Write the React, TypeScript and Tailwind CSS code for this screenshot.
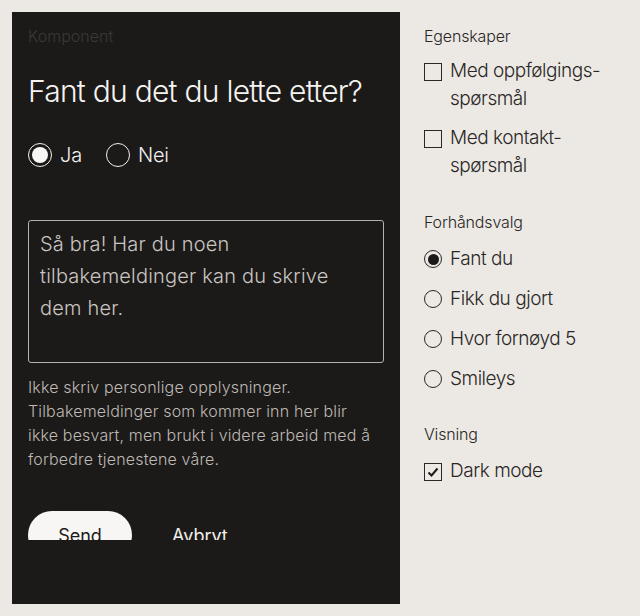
import React from "react";

const font = { fontFamily: "Inter, 'Noto Sans', sans-serif" };

function DarkRadio({ checked, label }: { checked?: boolean; label: string }) {
  return (
    <label className="flex items-center gap-2">
      <span className="w-6 h-6 rounded-full border-[1.5px] border-[#f3f1ee] flex items-center justify-center">
        {checked && <span className="w-4 h-4 rounded-full bg-[#f7f6f4]" />}
      </span>
      <span className="text-[20px] leading-7 text-[#f3f1ee] tracking-[-0.01em]">{label}</span>
    </label>
  );
}

function Checkbox({ checked, lines }: { checked?: boolean; lines: string[] }) {
  return (
    <div className="flex gap-2">
      <span className="mt-[6px] w-[18px] h-[18px] shrink-0 border-[1.5px] border-[#2a2725] flex items-center justify-center">
        {checked && (
          <svg width="12" height="12" viewBox="0 0 12 12" fill="none">
            <path d="M1.5 6.5 L4.5 9.5 L10.5 2.5" stroke="#1c1a19" strokeWidth="2" />
          </svg>
        )}
      </span>
      <span className="text-[19px] leading-7 text-[#2a2725] tracking-[-0.025em]">
        {lines.map((l, i) => (
          <span key={i} className="block">
            {l}
          </span>
        ))}
      </span>
    </div>
  );
}

function Radio({ checked, label }: { checked?: boolean; label: string }) {
  return (
    <div className="flex items-center gap-2">
      <span className="w-[18px] h-[18px] shrink-0 rounded-full border-[1.5px] border-[#2a2725] flex items-center justify-center">
        {checked && <span className="w-[11px] h-[11px] rounded-full bg-[#1c1a19]" />}
      </span>
      <span className="text-[19px] leading-7 text-[#2a2725] tracking-[-0.025em]">{label}</span>
    </div>
  );
}

export default function App() {
  return (
    <div className="min-h-[616px] w-[640px] bg-[#ece9e5] flex gap-6 p-3 font-light" style={font}>
      <div className="w-[388px] h-[592px] shrink-0 bg-[#1c1a19] px-4 pt-3">
        <div className="h-[516px] overflow-hidden">
          <div className="text-[16px] leading-6 text-[#3b3836]">Komponent</div>
          <h1 className="mt-[23px] text-[30px] leading-10 font-light tracking-[-0.025em] text-[#f5f3f0]">
            Fant du det du lette etter?
          </h1>
          <div className="mt-[30px] flex gap-6">
            <DarkRadio checked label="Ja" />
            <DarkRadio label="Nei" />
          </div>
          <div className="mt-[51px] h-[143px] border border-[#b5b1ad] rounded-[3px] pl-[11px] pr-3 pt-[7px] text-[20px] leading-8 text-[#c9c5c1] tracking-[0.01em]">
            <span className="block">Så bra! Har du noen</span>
            <span className="block">tilbakemeldinger kan du skrive</span>
            <span className="block">dem her.</span>
          </div>
          <p className="mt-3 text-[16px] leading-6 text-[#bdb9b4] tracking-[0.01em]">
            <span className="block">Ikke skriv personlige opplysninger.</span>
            <span className="block">Tilbakemeldinger som kommer inn her blir</span>
            <span className="block">ikke besvart, men brukt i videre arbeid med å</span>
            <span className="block">forbedre tjenestene våre.</span>
          </p>
          <div className="mt-10 flex items-center gap-10">
            <button className="h-12 w-[104px] rounded-full bg-[#f7f6f4] text-[18px] font-normal text-[#1c1a19]">
              Send
            </button>
            <button className="text-[18px] font-normal text-[#f3f1ee]">Avbryt</button>
          </div>
        </div>
      </div>
      <div className="pt-3 flex flex-col">
        <div className="text-[16px] leading-6 text-[#2a2725] tracking-[-0.01em]">Egenskaper</div>
        <div className="mt-[9px] flex flex-col gap-[11px]">
          <Checkbox lines={["Med oppfølgings-", "spørsmål"]} />
          <Checkbox lines={["Med kontakt-", "spørsmål"]} />
        </div>
        <div className="mt-[30px] text-[16px] leading-6 text-[#2a2725] tracking-[-0.01em]">Forhåndsvalg</div>
        <div className="mt-[11px] flex flex-col gap-3">
          <Radio checked label="Fant du" />
          <Radio label="Fikk du gjort" />
          <Radio label="Hvor fornøyd 5" />
          <Radio label="Smileys" />
        </div>
        <div className="mt-[29px] text-[16px] leading-6 text-[#2a2725] tracking-[-0.01em]">Visning</div>
        <div className="mt-[11px]">
          <Checkbox checked lines={["Dark mode"]} />
        </div>
      </div>
    </div>
  );
}
